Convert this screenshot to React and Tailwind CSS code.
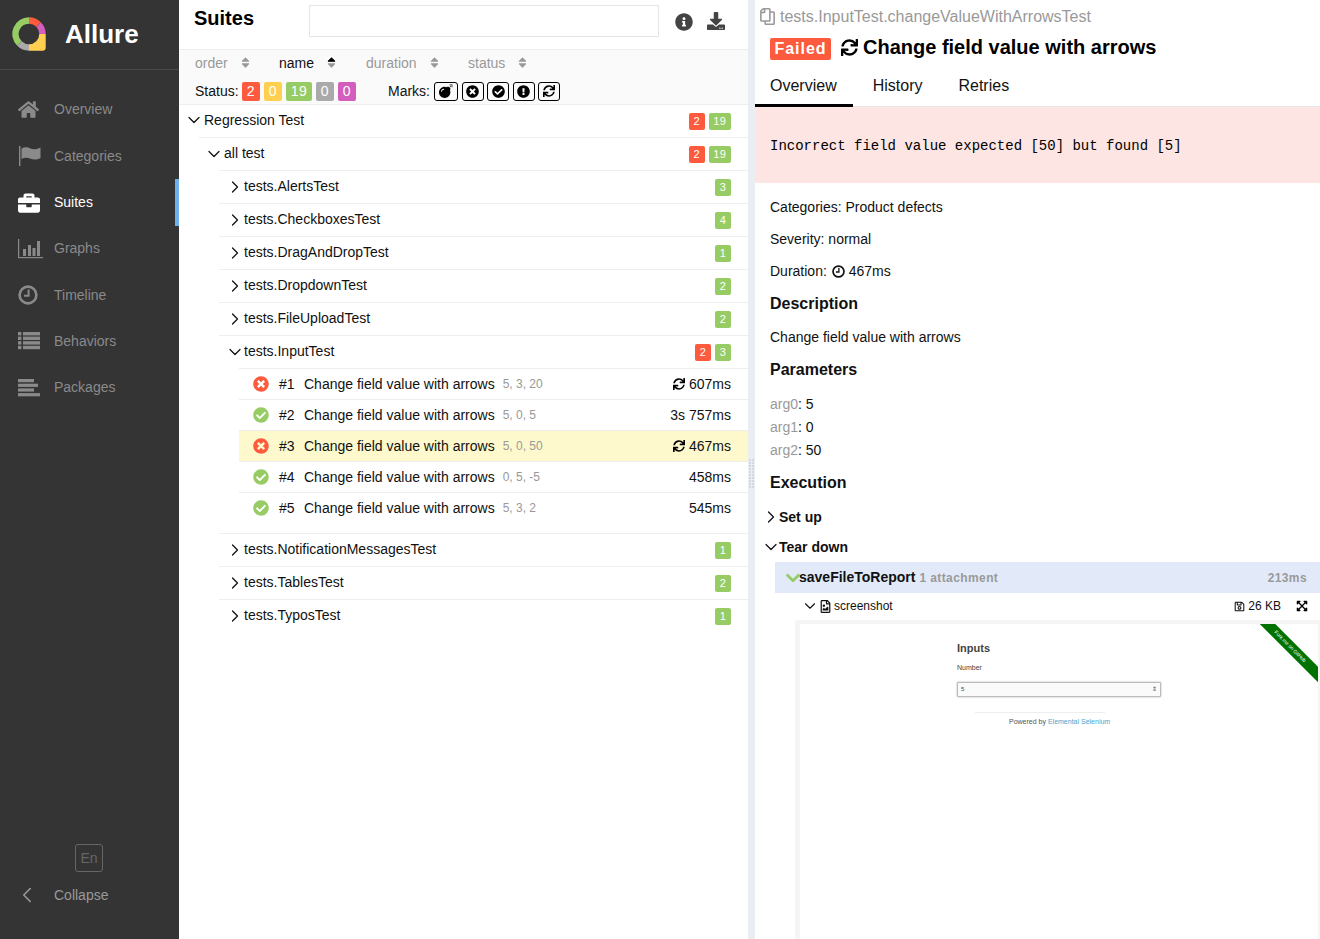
import { ChevronDown, ChevronRight, ChevronLeft } from 'lucide-react';
import {
  FaHome, FaBriefcase, FaSort, FaSortUp,
  FaBomb, FaTimesCircle, FaCheckCircle, FaExclamationCircle, FaSync, FaInfoCircle, FaDownload, FaRegCopy,
  FaRegSave, FaExpandArrowsAlt, FaRegFileImage,
} from 'react-icons/fa';

// FontAwesome 4 style glyphs that the icon packages don't carry in this shape
const FlagIcon = () => (
  <svg width="23" height="20" viewBox="0 0 23 20" fill="currentColor">
    <rect x="1" y="0" width="1.4" height="20" />
    <path d="M3.5 2.5C7 0.5 10 1.5 12.5 2.5C15.5 3.7 19 3.5 22.5 1.5V12C19 14 15.5 14 12.5 12.8C10 11.8 7 11 3.5 13Z" />
  </svg>
);

const GraphIcon = () => (
  <svg width="26" height="20" viewBox="0 0 26 20" fill="currentColor">
    <rect x="0" y="0" width="1.2" height="19" />
    <rect x="0" y="18" width="25" height="1.2" />
    <rect x="5" y="10" width="3" height="7" />
    <rect x="10" y="6" width="3" height="11" />
    <rect x="14.5" y="9" width="3" height="8" />
    <rect x="19" y="2" width="3" height="15" />
  </svg>
);

const ClockIcon = ({ size }) => (
  <svg width={size} height={size} viewBox="0 0 20 20" fill="none" stroke="currentColor">
    <circle cx="10" cy="10" r="8.4" strokeWidth="2.6" />
    <path d="M10.6 4.5V10.8H6" strokeWidth="2" />
  </svg>
);

const ListIcon = () => (
  <svg width="22" height="18" viewBox="0 0 22 18" fill="currentColor">
    {[0, 4.6, 9.2, 13.8].map((y) => (
      <g key={y}>
        <rect x="0" y={y} width="3.4" height="3.4" />
        <rect x="5" y={y} width="17" height="3.4" />
      </g>
    ))}
  </svg>
);

const PackagesIcon = () => (
  <svg width="22" height="18" viewBox="0 0 22 18" fill="currentColor">
    <rect x="0" y="0" width="16" height="3.2" />
    <rect x="0" y="4.7" width="20" height="3.2" />
    <rect x="0" y="9.4" width="16" height="3.2" />
    <rect x="0" y="14.1" width="22" height="3.2" />
  </svg>
);

const navItems = [
  { label: 'Overview', icon: <FaHome size={21} /> },
  { label: 'Categories', icon: <FlagIcon /> },
  { label: 'Suites', icon: <FaBriefcase size={22} />, active: true },
  { label: 'Graphs', icon: <GraphIcon /> },
  { label: 'Timeline', icon: <ClockIcon size={20} /> },
  { label: 'Behaviors', icon: <ListIcon /> },
  { label: 'Packages', icon: <PackagesIcon /> },
];

const suitesBefore = [
  { name: 'tests.AlertsTest', count: 3 },
  { name: 'tests.CheckboxesTest', count: 4 },
  { name: 'tests.DragAndDropTest', count: 1 },
  { name: 'tests.DropdownTest', count: 2 },
  { name: 'tests.FileUploadTest', count: 2 },
];

const suitesAfter = [
  { name: 'tests.NotificationMessagesTest', count: 1 },
  { name: 'tests.TablesTest', count: 2 },
  { name: 'tests.TyposTest', count: 1 },
];

const testRows = [
  { n: 1, failed: true, params: '5, 3, 20', time: '607ms', retry: true },
  { n: 2, failed: false, params: '5, 0, 5', time: '3s 757ms' },
  { n: 3, failed: true, params: '5, 0, 50', time: '467ms', retry: true, selected: true },
  { n: 4, failed: false, params: '0, 5, -5', time: '458ms' },
  { n: 5, failed: false, params: '5, 3, 2', time: '545ms' },
];

const Logo = () => (
  <svg width="36" height="36" viewBox="0 0 36 36" fill="none" strokeWidth="6.4">
    <path d="M17 3.5A13.5 13.5 0 0 0 7.45 26.55" stroke="#97cc64" />
    <path d="M7.45 26.55A13.5 13.5 0 0 0 17 30.5" stroke="#aaaaaa" />
    <path d="M17 27.3A10.3 10.3 0 0 0 27.3 17H33.7V30.5Q33.7 33.7 30.5 33.7H17Z" fill="#ffd050" />
    <path d="M26.55 7.45A13.5 13.5 0 0 1 30.5 17" stroke="#d35ebe" />
    <path d="M17 3.5A13.5 13.5 0 0 1 26.55 7.45" stroke="#fd5a3e" />
  </svg>
);

const Sidebar = () => (
  <aside className="w-[179px] shrink-0 h-full bg-[#343434] flex flex-col">
    <div className="h-[70px] border-b border-[#4a4a4a] flex items-center pl-[12px]">
      <Logo />
      <span className="ml-[17px] text-[26px] font-bold text-white">Allure</span>
    </div>
    <nav className="pt-[16.8px]">
      {navItems.map(({ label, icon, active }) => (
        <div key={label} className="relative h-[46.3px] flex items-center pl-[18px]">
          <span className={`w-[36px] flex items-center ${active ? 'text-white' : 'text-[#8a8a8a]'}`}>{icon}</span>
          <span className={`text-[14px] ${active ? 'text-white' : 'text-[#8a8a8a]'}`}>{label}</span>
          {active && <span className="absolute right-0 top-0 bottom-0 w-[4px] bg-[#6eb0ee]" />}
        </div>
      ))}
    </nav>
    <div className="mt-auto pb-[29px]">
      <div className="flex justify-center pr-[1px]">
        <span className="w-[28px] h-[28px] flex items-center justify-center rounded-[3px] border border-[#666] text-[14px] text-[#666]">En</span>
      </div>
      <div className="mt-[8px] h-[30px] flex items-center pl-[14px] text-[#999]">
        <ChevronLeft size={26} strokeWidth={1.5} />
        <span className="ml-[14px] text-[14px]">Collapse</span>
      </div>
    </div>
  </aside>
);

const SortItem = ({ label, active, width }) => (
  <div className={`flex items-center gap-[11px] ${width} ${active ? 'text-[#111]' : 'text-[#999]'}`}>
    <span className="text-[14px]">{label}</span>
    <span className="relative w-[9px] h-[14px] text-[12px] text-[#999]">
      <FaSort className="absolute inset-0" size={13} />
      {active && <FaSortUp className="absolute inset-0 text-black" size={13} />}
    </span>
  </div>
);

const Tag = ({ color, width, children }) => (
  <span className={`h-[19px] ${width} rounded-[2px] flex items-center justify-center text-[14px] text-white tracking-[0.5px] ${color}`}>{children}</span>
);

const MarkBtn = ({ width, children }) => (
  <span className={`h-[19px] ${width} rounded-[3px] border border-black flex items-center justify-center text-black`}>{children}</span>
);

const Badge = ({ color, children }) => (
  <span className={`h-[17px] min-w-[16px] px-[4.5px] rounded-[2px] flex items-center justify-center text-[11px] text-white tracking-[0.5px] ${color}`}>{children}</span>
);

const Counts = ({ failed, passed }) => (
  <div className="ml-auto mt-[2px] flex items-center gap-[4px]">
    {failed && <Badge color="bg-[#fd5a3e]">{failed}</Badge>}
    <Badge color="bg-[#97cc64]">{passed}</Badge>
  </div>
);

// rows carry their top line, so a line starts where the row itself starts
const TreeRow = ({ open, name, failed, passed, left, textGap }) => (
  <div className={`h-[33px] pb-[1px] flex items-center pr-[17px] border-t border-[#eeeeee] ${left}`}>
    {open
      ? <ChevronDown size={20} strokeWidth={1.5} className={`text-[#111] ${textGap}`} />
      : <ChevronRight size={20} strokeWidth={1.5} className={`text-[#111] ${textGap}`} />}
    <span className="text-[14px] text-[#111]">{name}</span>
    <Counts failed={failed} passed={passed} />
  </div>
);

const TestRow = ({ n, failed, params, time, retry, selected }) => (
  <div className={`h-[31px] flex items-center border-t border-[#eeeeee] pl-[14px] pr-[17px] text-[14px] text-[#111] ${selected ? 'bg-[#fdf9cd]' : ''}`}>
    {failed
      ? <FaTimesCircle size={16} className="text-[#fd5a3e]" />
      : <FaCheckCircle size={16} className="text-[#97cc64]" />}
    <span className="ml-[10px] w-[25px]">#{n}</span>
    <span>Change field value with arrows</span>
    <span className="ml-[8px] text-[12px] text-[#999]">{params}</span>
    <span className="ml-auto flex items-center gap-[4px]">
      {retry && <FaSync size={12} className="text-black" />}
      {time}
    </span>
  </div>
);

const SuitesPane = () => (
  <section className="w-[569px] shrink-0 h-full bg-white flex flex-col">
    <div className="h-[50px] border-b border-[#eeeeee] flex items-start pl-[15px]">
      <h2 className="mt-[3px] w-[115px] text-[20px] font-bold text-black">Suites</h2>
      <div className="mt-[5px] w-[350px] h-[32px] border border-[#e5e5e5]" />
      <FaInfoCircle size={18} className="mt-[13px] ml-[16px] text-[#444]" />
      <FaDownload size={18} className="mt-[12px] ml-[14px] text-[#444]" />
    </div>
    <div className="h-[55px] bg-[#fafafa] border-b border-[#eeeeee] pl-[16px]">
      <div className="h-[26px] flex items-center">
        <SortItem label="order" width="w-[84px]" />
        <SortItem label="name" active width="w-[87px]" />
        <SortItem label="duration" width="w-[102px]" />
        <SortItem label="status" width="w-[80px]" />
      </div>
      <div className="mt-[3px] h-[24px] flex items-center text-[14px] text-[#111]">
        <span className="w-[47px]">Status:</span>
        <div className="flex gap-[4px]">
          <Tag color="bg-[#fd5a3e]" width="w-[18px]">2</Tag>
          <Tag color="bg-[#ffd050]" width="w-[18px]">0</Tag>
          <Tag color="bg-[#97cc64]" width="w-[26px]">19</Tag>
          <Tag color="bg-[#aaaaaa]" width="w-[18px]">0</Tag>
          <Tag color="bg-[#d35ebe]" width="w-[18px]">0</Tag>
        </div>
        <span className="ml-[32px] w-[46px]">Marks:</span>
        <div className="flex gap-[3.5px]">
          <MarkBtn width="w-[24px]"><FaBomb size={14} /></MarkBtn>
          <MarkBtn width="w-[22px]"><FaTimesCircle size={13} /></MarkBtn>
          <MarkBtn width="w-[22px]"><FaCheckCircle size={13} /></MarkBtn>
          <MarkBtn width="w-[22px]"><FaExclamationCircle size={13} /></MarkBtn>
          <MarkBtn width="w-[22px]"><FaSync size={12} /></MarkBtn>
        </div>
      </div>
    </div>
    <div className="flex-1">
      <div className="h-[32px] pb-[2px] pl-[5px] pr-[17px] flex items-center">
        <ChevronDown size={20} strokeWidth={1.5} className="text-[#111]" />
        <span className="text-[14px] text-[#111]">Regression Test</span>
        <Counts failed={2} passed={19} />
      </div>
      <TreeRow open name="all test" failed={2} passed={19} left="ml-[20px] pl-[5px]" textGap="" />
      {suitesBefore.map((s) => (
        <TreeRow key={s.name} name={s.name} passed={s.count} left="ml-[40px] pl-[6px]" textGap="-mr-[1px]" />
      ))}
      <TreeRow open name="tests.InputTest" failed={2} passed={3} left="ml-[40px] pl-[6px]" textGap="-mr-[1px]" />
      <div className="ml-[60px]">
        {testRows.map((r) => <TestRow key={r.n} {...r} />)}
      </div>
      <div className="h-[10px]" />
      {suitesAfter.map((s) => (
        <TreeRow key={s.name} name={s.name} passed={s.count} left="ml-[40px] pl-[6px]" textGap="-mr-[1px]" />
      ))}
    </div>
  </section>
);

const Splitter = () => (
  <div className="w-[7px] shrink-0 h-full bg-[#eaedf2] flex items-center justify-center">
    <div className="-mb-[8px] grid grid-cols-2 gap-[1px]">
      {Array.from({ length: 20 }).map((_, i) => (
        <span key={i} className="w-[2px] h-[2px] bg-[#d4d7dc]" />
      ))}
    </div>
  </div>
);

// the attachment preview, a small picture of the page under test
const Preview = () => (
  <div className="ml-[40px] h-[319px] bg-[#f5f5f5] pl-[5px] pr-[2px] pt-[4px]">
    <div className="relative h-full bg-white overflow-hidden">
      <div className="absolute left-[157px] top-[17px] w-[204px]">
        <div className="text-[11px] leading-[14px] font-bold text-[#444]">Inputs</div>
        <div className="mt-[9px] text-[7px] leading-[8px] text-[#444]">Number</div>
        <div className="mt-[10px] h-[15px] rounded-[1px] border border-[#bbb] shadow-[0_0_2px_#aaa] bg-[#fafafa] flex items-center justify-between px-[3px] text-[6px] text-[#444]">
          <span>5</span>
          <span>⇕</span>
        </div>
        <div className="mt-[15px] ml-[18px] w-[130px] border-t border-[#eeeeee]" />
        <div className="mt-[5px] ml-[52px] text-[7px] leading-[8px] whitespace-nowrap text-[#555]">
          Powered by <span className="text-[#47a7cf]">Elemental Selenium</span>
        </div>
      </div>
      <div className="absolute left-[435px] top-[17px] w-[110px] h-[11px] rotate-45 bg-[#007200] flex items-center justify-center text-[5px] whitespace-nowrap text-white">
        Fork me on GitHub
      </div>
    </div>
  </div>
);

const H3 = ({ className, children }) => (
  <h3 className={`pl-[15px] flex items-center text-[16px] font-bold text-[#111] ${className}`}>{children}</h3>
);

const Line = ({ className, children }) => (
  <div className={`pl-[15px] flex items-center text-[14px] text-[#111] ${className}`}>{children}</div>
);

const Param = ({ name, value }) => (
  <div className="pl-[15px] h-[23px] flex items-center text-[14px] text-[#111]">
    <span className="text-[#999]">{name}</span>: {value}
  </div>
);

const DetailPane = () => (
  <section className="flex-1 h-full bg-white overflow-hidden">
    <div className="h-[32px] flex items-center pl-[4px] pt-[1px] text-[16px] text-[#999]">
      <FaRegCopy size={17} className="mr-[4px] -scale-x-100" />
      tests.InputTest.changeValueWithArrowsTest
    </div>
    <div className="h-[31px] flex items-center pl-[15px]">
      <span className="mt-[3px] h-[22px] w-[61px] rounded-[2px] bg-[#fd5a3e] flex items-center justify-center text-[16px] font-bold tracking-[1px] text-white">Failed</span>
      <FaSync size={17} className="ml-[10px] text-black" />
      <span className="ml-[5px] -mt-[2px] text-[20px] font-bold text-black">Change field value with arrows</span>
    </div>
    <div className="h-[44px] flex border-b border-[#e5e5e5] text-[16px] text-[#111]">
      <div className="h-[44px] pl-[15px] pr-[16px] pt-[11px] border-b-[3px] border-black">Overview</div>
      <div className="ml-[4px] px-[16px] pt-[11px]">History</div>
      <div className="ml-[4px] px-[16px] pt-[11px]">Retries</div>
    </div>
    <div className="h-[76px] bg-[#fde5e3] flex items-center pl-[15px] pt-[2px] font-['Liberation_Mono',monospace] text-[14px] text-black">
      Incorrect field value expected [50] but found [5]
    </div>
    <div className="pt-[8px]">
      <Line className="h-[32px]">Categories: Product defects</Line>
      <Line className="h-[32px]">Severity: normal</Line>
      <Line className="h-[32px]">
        Duration:&nbsp;
        <span className="ml-[1px] mr-[4px]"><ClockIcon size={13} /></span>
        467ms
      </Line>
      <H3 className="h-[33px]">Description</H3>
      <Line className="mt-[1px] h-[32px]">Change field value with arrows</Line>
      <H3 className="h-[32px] pt-[1px]">Parameters</H3>
      <div className="mt-[8px]">
        <Param name="arg0" value="5" />
        <Param name="arg1" value="0" />
        <Param name="arg2" value="50" />
      </div>
      <H3 className="mt-[4px] h-[32px] pt-[1px]">Execution</H3>
      <div className="mt-[4px] h-[30px] flex items-center pl-[6px] text-[14px] font-bold text-[#111]">
        <ChevronRight size={20} strokeWidth={1.5} className="-mr-[2px]" />
        Set up
      </div>
      <div className="h-[30px] flex items-center pl-[6px] text-[14px] font-bold text-[#111]">
        <ChevronDown size={20} strokeWidth={1.5} className="-mr-[2px]" />
        Tear down
      </div>
      <div className="ml-[20px] h-[31px] bg-[#e2eafa] flex items-center pl-[7px] pr-[13px] text-[14px] font-bold text-[#111]">
        <ChevronDown size={22} strokeWidth={3} className="text-[#97cc64] -mr-[5px]" />
        saveFileToReport
        <span className="ml-[4px] text-[12px] tracking-[0.4px] text-[#999]">1 attachment</span>
        <span className="ml-auto text-[12px] tracking-[0.4px] text-[#999]">213ms</span>
      </div>
      <div className="h-[26px] mb-[1px] ml-[46px] pr-[12px] flex items-center text-[12px] text-[#111]">
        <ChevronDown size={18} strokeWidth={1.5} />
        <FaRegFileImage size={13} className="mr-[2px]" />
        screenshot
        <FaRegSave size={11} className="ml-auto mr-[3px]" />
        26 KB
        <FaExpandArrowsAlt size={12} className="ml-[15px] text-black" />
      </div>
      <Preview />
    </div>
  </section>
);

export default function App() {
  return (
    <div className="w-[1320px] h-[939px] flex overflow-hidden font-['Liberation_Sans',Arial,sans-serif]">
      <Sidebar />
      <SuitesPane />
      <Splitter />
      <DetailPane />
    </div>
  );
}
